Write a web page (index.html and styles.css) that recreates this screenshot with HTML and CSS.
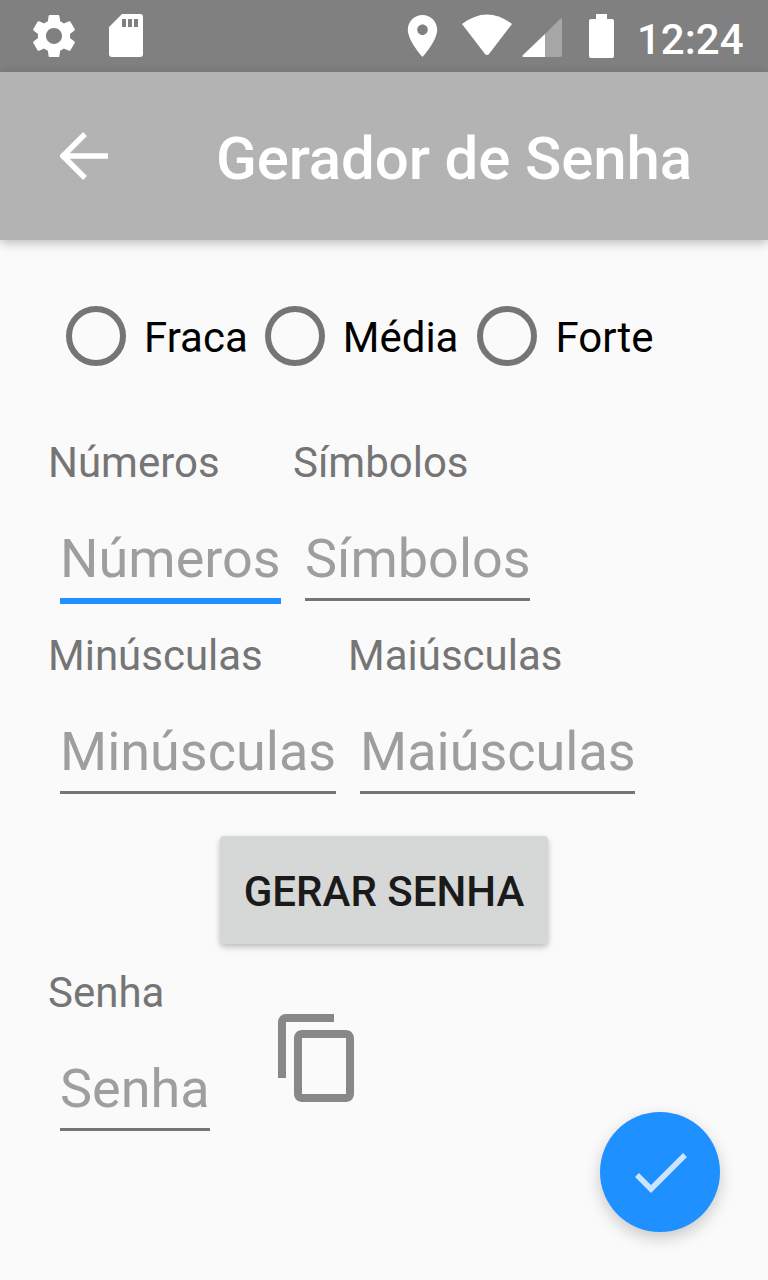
FILE: index.html
```html
<!DOCTYPE html>
<html lang="pt">
<head>
<meta charset="utf-8">
<title>Gerador de Senha</title>
<link rel="stylesheet" href="styles.css">
</head>
<body>
<div class="screen">
  <header class="status-bar">
    <svg class="ic-gear" viewBox="2.6 2 18.8 20" preserveAspectRatio="none"><path d="M19.14 12.94c.04-.3.06-.61.06-.94 0-.32-.02-.64-.07-.94l2.03-1.58c.18-.14.23-.41.12-.61l-1.92-3.32c-.12-.22-.37-.29-.59-.22l-2.39.96c-.5-.38-1.03-.7-1.62-.94l-.36-2.54c-.04-.24-.24-.41-.48-.41h-3.84c-.24 0-.43.17-.47.41l-.36 2.54c-.59.24-1.13.57-1.62.94l-2.39-.96c-.22-.08-.47 0-.59.22L2.74 8.87c-.12.21-.08.47.12.61l2.03 1.58c-.05.3-.09.63-.09.94s.02.64.07.94l-2.03 1.58c-.18.14-.23.41-.12.61l1.92 3.32c.12.22.37.29.59.22l2.39-.96c.5.38 1.03.7 1.62.94l.36 2.54c.05.24.24.41.48.41h3.84c.24 0 .44-.17.47-.41l.36-2.54c.59-.24 1.13-.56 1.62-.94l2.39.96c.22.08.47 0 .59-.22l1.92-3.32c.12-.22.07-.47-.12-.61l-2.01-1.58zM12 15.6c-1.98 0-3.6-1.62-3.6-3.6s1.62-3.6 3.6-3.6 3.6 1.62 3.6 3.6-1.62 3.6-3.6 3.6z"/></svg>
    <svg class="ic-sd" viewBox="0 0 34 43"><path fill-rule="evenodd" d="M13 0H31C33 0 34 1 34 3V40C34 42 33 43 31 43H3C1 43 0 42 0 40V13ZM13 5V13H17V5ZM19 5V13H23V5ZM25 5V13H29V5Z"/></svg>
    <span class="spacer"></span>
    <svg class="ic-pin" viewBox="5 2 14 20"><path d="M12 2C8.13 2 5 5.13 5 9c0 5.25 7 13 7 13s7-7.75 7-13c0-3.87-3.13-7-7-7zm0 9.5c-1.38 0-2.5-1.12-2.5-2.5s1.12-2.5 2.5-2.5 2.5 1.12 2.5 2.5-1.12 2.5-2.5 2.5z"/></svg>
    <svg class="ic-wifi" viewBox="0 0 52 42"><path d="M1 10Q26 -9 51 10L28 40Q26 42 24 40Z"/></svg>
    <svg class="ic-signal" viewBox="0 0 40 40"><path class="dim" d="M23 17L38 2Q40 0 40 3V38Q40 40 38 40H23Z"/><path d="M23 17V40H2Q-1 40 1 38Z"/></svg>
    <svg class="ic-battery" viewBox="0 0 25 44"><path d="M7 0H18V5H23Q25 5 25 7V42Q25 44 23 44H2Q0 44 0 42V7Q0 5 2 5H7Z"/></svg>
    <span class="clock">12:24</span>
  </header>
  <div class="app-bar">
    <svg class="ic-back" viewBox="0 0 48 48"><path d="M48 24H3M25 2L3 24L25 46"/></svg>
    <h1 class="title">Gerador de Senha</h1>
  </div>
  <main class="content">
    <div class="radios">
      <span class="radio"></span><span class="radio-label rl-1">Fraca</span>
      <span class="radio"></span><span class="radio-label rl-2">Média</span>
      <span class="radio"></span><span class="radio-label rl-3">Forte</span>
    </div>
    <div class="row row-a">
      <div class="field f-num"><div class="label">Números</div><div class="input focused">Números</div></div>
      <div class="field f-sym"><div class="label">Símbolos</div><div class="input">Símbolos</div></div>
    </div>
    <div class="row row-b">
      <div class="field f-min"><div class="label">Minúsculas</div><div class="input">Minúsculas</div></div>
      <div class="field f-mai"><div class="label">Maiúsculas</div><div class="input">Maiúsculas</div></div>
    </div>
    <div class="action"><button class="btn">GERAR SENHA</button></div>
    <div class="row row-c">
      <div class="field f-sen"><div class="label">Senha</div><div class="input">Senha</div></div>
      <svg class="ic-copy" viewBox="2 1 19.5 22"><path d="M16 1H4c-1.1 0-2 .9-2 2v14h2V3h12V1zm3 4H8c-1.1 0-2 .9-2 2v14c0 1.1.9 2 2 2h11c1.1 0 2-.9 2-2V7c0-1.1-.9-2-2-2zm0 16H8V7h11v14z"/></svg>
    </div>
  </main>
  <button class="fab"><svg class="ic-check" viewBox="0 0 60 60"><path d="M7 33L21 47L55 13"/></svg></button>
</div>
</body>
</html>
```
FILE: styles.css
```css
* { box-sizing: border-box; }
html, body { margin: 0; padding: 0; }
body { font-family: Roboto, "Liberation Sans", sans-serif; background: #fafafa; }
.screen { position: relative; width: 768px; height: 1280px; overflow: hidden; background: #fafafa; }

.status-bar { height: 72px; background: #808080; display: flex; align-items: flex-start; padding-left: 33px; }
.status-bar svg { fill: #fff; flex: none; display: block; }
.spacer { flex: 1; }
.ic-gear { width: 42px; height: 44px; margin-top: 14px; }
.ic-sd { width: 34px; height: 43px; margin-top: 14px; margin-left: 34px; }
.ic-pin { width: 31px; height: 42px; margin-top: 15px; }
.ic-wifi { width: 52px; height: 42px; margin-top: 14px; margin-left: 23px; }
.ic-signal { width: 40px; height: 40px; margin-top: 17px; margin-left: 9px; }
.status-bar .dim { fill: #a6a6a6; }
.ic-battery { width: 25px; height: 44px; margin-top: 14px; margin-left: 27px; }
.clock { color: #fff; font-size: 42px; font-weight: 500; line-height: 72px; height: 72px; padding-top: 4px; margin-left: 23px; margin-right: 25px; width: 106px; white-space: nowrap; }

.app-bar { height: 168px; background: #b3b3b3; display: flex; align-items: center; padding-left: 60px; box-shadow: 0 3px 10px rgba(0,0,0,.25); position: relative; }
.ic-back { width: 48px; height: 48px; fill: none; stroke: #fff; stroke-width: 5.5; flex: none; }
.title { margin: 6px 0 0 108px; font-size: 60px; font-weight: 500; letter-spacing: -0.12px; color: #fff; line-height: 72px; white-space: nowrap; }

.content { display: flex; flex-direction: column; }
.radios { display: flex; align-items: center; height: 60px; margin-top: 66px; padding-left: 66px; }
.radio { width: 60px; height: 60px; border-radius: 50%; border: 6.5px solid #757575; flex: none; }
.radio-label { font-size: 42px; color: #000; line-height: 60px; margin-top: 4px; }
.rl-1 { margin-left: 18px; margin-right: 17px; }
.rl-2 { margin-left: 18px; margin-right: 19px; }
.rl-3 { margin-left: 18px; }

.row { display: flex; align-items: flex-start; padding-left: 48px; }
.row-a { margin-top: 72px; }
.row-b { margin-top: 27px; }
.row-c { margin-top: 24px; }
.field { flex: none; }
.label { font-size: 42px; line-height: 50px; color: #757575; white-space: nowrap; }
.input { font-size: 54px; line-height: 64px; color: #9e9e9e; margin: 39px 0 0 12px; height: 74px; border-bottom: 3px solid #757575; white-space: nowrap; }
.input.focused { border-bottom: 6px solid #1e90ff; height: 77px; }
.f-num { width: 245px; }
.f-num .input { width: 221px; }
.f-sym .input { width: 225px; }
.f-min { width: 300px; }
.f-min .input { width: 276px; }
.f-mai .input { width: 275px; }
.f-sen .input { width: 150px; }
.ic-copy { width: 78px; height: 88px; fill: #888; margin: 46px 0 0 68px; flex: none; }

.action { display: flex; justify-content: center; margin-top: 42px; }
.btn { width: 328px; height: 108px; background: #d6d7d7; border: 0; border-radius: 4px; font-family: inherit; font-size: 42px; font-weight: 500; color: #1a1a1a; box-shadow: 0 3px 6px rgba(0,0,0,.25); padding: 2px 0 0; }

.fab { position: absolute; left: 600px; top: 1112px; width: 120px; height: 120px; border-radius: 50%; border: 0; padding: 0; background: #1e90ff; box-shadow: 0 6px 16px rgba(0,0,0,.2); display: flex; align-items: center; justify-content: center; }
.ic-check { width: 60px; height: 60px; fill: none; stroke: #cce5ff; stroke-width: 5.5; }
```
